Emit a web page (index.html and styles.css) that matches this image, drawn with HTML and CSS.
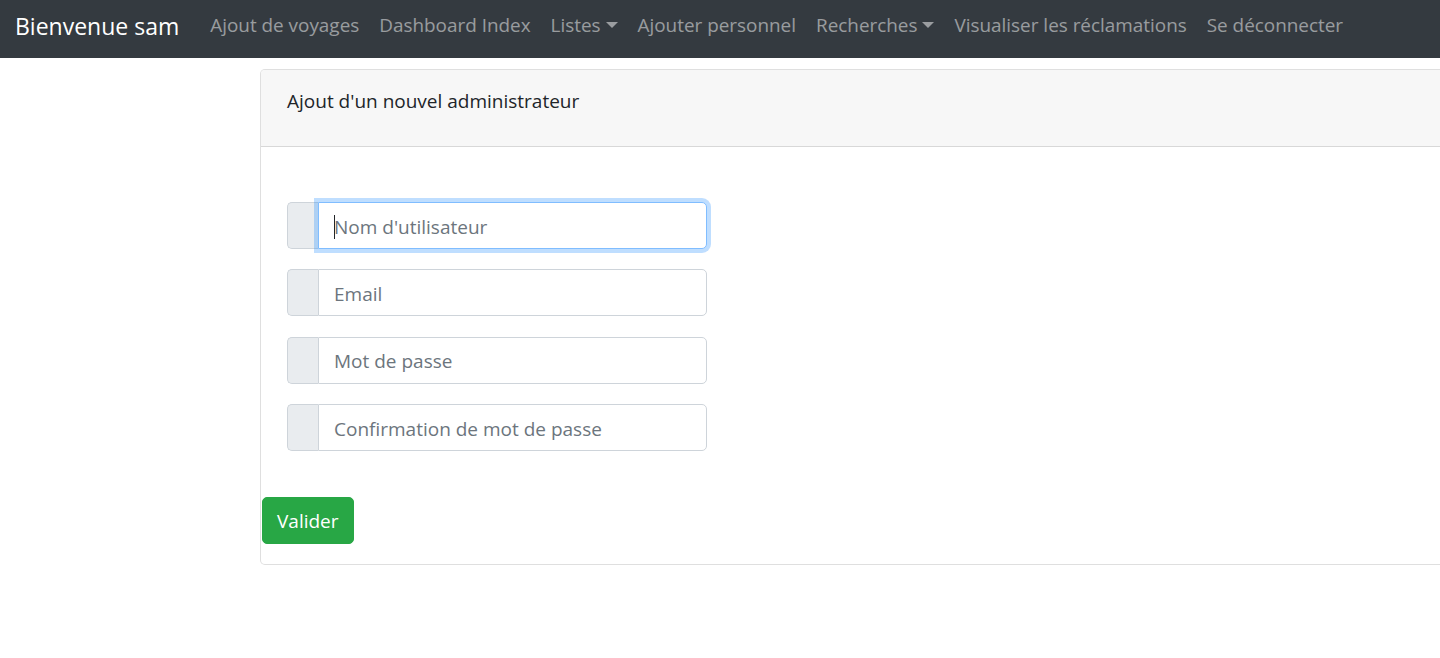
FILE: index.html
```html
<!DOCTYPE html>
<html lang="fr">
<head>
<meta charset="utf-8">
<title>Ajout administrateur</title>
<link rel="stylesheet" href="styles.css">
</head>
<body>
<nav class="navbar">
  <a class="brand" href="#">Bienvenue sam</a>
  <ul class="nav">
    <li><a class="nav-link" href="#">Ajout de voyages</a></li>
    <li><a class="nav-link" href="#">Dashboard Index</a></li>
    <li><a class="nav-link dropdown" href="#">Listes</a></li>
    <li><a class="nav-link" href="#">Ajouter personnel</a></li>
    <li><a class="nav-link dropdown" href="#">Recherches</a></li>
    <li><a class="nav-link" href="#">Visualiser les réclamations</a></li>
    <li><a class="nav-link" href="#">Se déconnecter</a></li>
  </ul>
</nav>
<main class="page">
  <section class="card">
    <div class="card-header">Ajout d'un nouvel administrateur</div>
    <form class="card-form">
      <div class="card-body">
        <div class="input-group">
          <span class="prepend"></span>
          <div class="field focused">
            <input class="form-control" type="text" placeholder="Nom d'utilisateur">
            <span class="caret"></span>
          </div>
        </div>
        <div class="input-group">
          <span class="prepend"></span>
          <div class="field"><input class="form-control" type="email" placeholder="Email"></div>
        </div>
        <div class="input-group">
          <span class="prepend"></span>
          <div class="field"><input class="form-control" type="password" placeholder="Mot de passe"></div>
        </div>
        <div class="input-group">
          <span class="prepend"></span>
          <div class="field"><input class="form-control" type="password" placeholder="Confirmation de mot de passe"></div>
        </div>
      </div>
      <div class="actions">
        <button class="btn-success" type="button">Valider</button>
      </div>
    </form>
  </section>
</main>
</body>
</html>
```

FILE: styles.css
```css
* { box-sizing: border-box; }

html, body {
  margin: 0;
  padding: 0;
  overflow: hidden;
  background: #fff;
}

body {
  font-family: "Open Sans", "Noto Sans", "Liberation Sans", sans-serif;
  color: #212529;
  font-size: 19px;
  line-height: 1.5;
}

.navbar {
  display: flex;
  align-items: flex-start;
  height: 58px;
  padding: 9px 15px 0;
  background: #343a40;
}

.brand {
  color: #fff;
  text-decoration: none;
  font-size: 23px;
  line-height: 34px;
  margin-right: 21px;
  white-space: nowrap;
}

.nav {
  display: flex;
  list-style: none;
  margin: 2px 0 0;
  padding: 0;
}

.nav-link {
  display: block;
  padding: 0 10px;
  color: rgba(255, 255, 255, 0.5);
  text-decoration: none;
  font-size: 18.9px;
  line-height: 28px;
  white-space: nowrap;
}

.dropdown::after {
  content: "";
  display: inline-block;
  margin-left: 5px;
  vertical-align: 4px;
  border-top: 6px solid;
  border-left: 6px solid transparent;
  border-right: 6px solid transparent;
  border-bottom: 0;
}

.page {
  padding: 11px 0 0 260px;
}

.card {
  margin-right: -20px;
  border: 1px solid rgba(0, 0, 0, 0.125);
  border-radius: 5px;
  background: #fff;
}

.card-header {
  padding: 17px 26px 31px;
  line-height: 28px;
  background: #f7f7f7;
  border-bottom: 1px solid rgba(0, 0, 0, 0.125);
  border-radius: 4px 4px 0 0;
}

.card-body {
  padding: 55px 26px 46px;
}

.input-group {
  display: flex;
  width: 420px;
  height: 47px;
  margin-bottom: 20.4px;
}

.input-group:last-child {
  margin-bottom: 0;
}

.prepend {
  width: 31px;
  flex: none;
  background: #e9ecef;
  border: 1px solid #ced4da;
  border-right: 0;
  border-radius: 5px 0 0 5px;
}

.field {
  position: relative;
  flex: 1;
  display: flex;
}

.form-control {
  flex: 1;
  width: 100%;
  height: 100%;
  margin: 0;
  padding: 2px 15px 0;
  font-family: inherit;
  font-size: 19px;
  color: #495057;
  background: #fff;
  border: 1px solid #ced4da;
  border-radius: 0 5px 5px 0;
  outline: none;
}

.form-control::placeholder {
  color: #6c757d;
  opacity: 1;
}

.focused .form-control {
  border-color: #80bdff;
  box-shadow: 0 0 0 4px rgba(0, 123, 255, 0.25);
}

.caret {
  position: absolute;
  left: 16px;
  top: 13px;
  width: 1px;
  height: 24px;
  background: #212529;
}

.actions {
  padding: 0 0 20px 1px;
}

.btn-success {
  display: block;
  height: 47px;
  padding: 0 14px;
  font-family: inherit;
  font-size: 19px;
  line-height: 28px;
  color: #fff;
  background: #28a745;
  border: 1px solid #28a745;
  border-radius: 5px;
  cursor: pointer;
}
```
